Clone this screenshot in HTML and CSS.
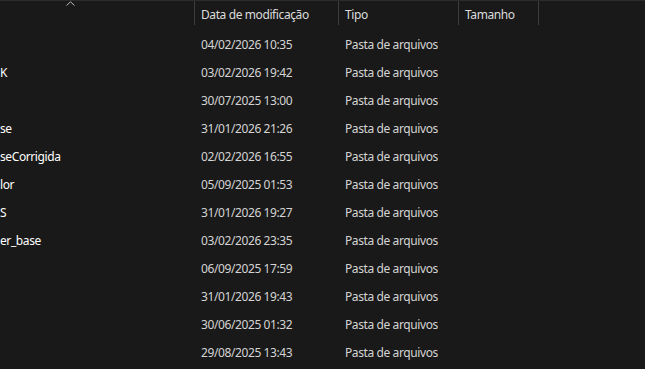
FILE: index.html
```html
<!DOCTYPE html>
<html lang="pt-BR">
<head>
<meta charset="utf-8">
<link rel="stylesheet" href="styles.css">
</head>
<body>
<div class="explorer">
  <div class="header">
    <div class="hcell name-h"><span class="sort-arrow"><svg width="9" height="5" viewBox="0 0 9 5"><path d="M0.5 4.5 L4.5 0.8 L8.5 4.5" fill="none" stroke="#bdbdbd" stroke-width="1"/></svg></span></div>
    <div class="hcell sep">Data de modificação</div>
    <div class="hcell sep">Tipo</div>
    <div class="hcell sep">Tamanho</div>
    <div class="hcell sep last"></div>
  </div>
  <div class="rows">
    <div class="row"><div class="name"></div><div class="date">04/02/2026 10:35</div><div class="type">Pasta de arquivos</div></div>
    <div class="row"><div class="name">K</div><div class="date">03/02/2026 19:42</div><div class="type">Pasta de arquivos</div></div>
    <div class="row"><div class="name"></div><div class="date">30/07/2025 13:00</div><div class="type">Pasta de arquivos</div></div>
    <div class="row"><div class="name">se</div><div class="date">31/01/2026 21:26</div><div class="type">Pasta de arquivos</div></div>
    <div class="row"><div class="name">seCorrigida</div><div class="date">02/02/2026 16:55</div><div class="type">Pasta de arquivos</div></div>
    <div class="row"><div class="name">lor</div><div class="date">05/09/2025 01:53</div><div class="type">Pasta de arquivos</div></div>
    <div class="row"><div class="name">S</div><div class="date">31/01/2026 19:27</div><div class="type">Pasta de arquivos</div></div>
    <div class="row"><div class="name">er_base</div><div class="date">03/02/2026 23:35</div><div class="type">Pasta de arquivos</div></div>
    <div class="row"><div class="name"></div><div class="date">06/09/2025 17:59</div><div class="type">Pasta de arquivos</div></div>
    <div class="row"><div class="name"></div><div class="date">31/01/2026 19:43</div><div class="type">Pasta de arquivos</div></div>
    <div class="row"><div class="name"></div><div class="date">30/06/2025 01:32</div><div class="type">Pasta de arquivos</div></div>
    <div class="row"><div class="name"></div><div class="date">29/08/2025 13:43</div><div class="type">Pasta de arquivos</div></div>
  </div>
</div>
</body>
</html>
```
FILE: styles.css
```css
html, body {
  margin: 0;
  padding: 0;
  background: #191919;
  overflow: hidden;
}
.explorer {
  width: 645px;
  height: 369px;
  border-top: 1px solid #2b2b2b;
  box-sizing: border-box;
  font-family: "Noto Sans", "Open Sans", sans-serif;
  font-size: 12px;
  letter-spacing: -0.4px;
  color: #e6e6e6;
}
.header {
  display: grid;
  grid-template-columns: 194px 144px 120px 80px 1fr;
  height: 29px;
}
.hcell {
  height: 24px;
  line-height: 27px;
  color: #dcdcdc;
  white-space: nowrap;
  overflow: hidden;
  position: relative;
}
.sep {
  border-left: 1px solid #3c3c3c;
  padding-left: 6px;
}
.name-h {
  position: relative;
}
.sort-arrow {
  position: absolute;
  left: 66px;
  top: 0px;
  line-height: 0;
}
.rows {
  display: flex;
  flex-direction: column;
}
.row {
  display: grid;
  grid-template-columns: 194px 144px 120px;
  height: 28px;
  align-items: center;
  white-space: nowrap;
}
.name {
  color: #ffffff;
  overflow: hidden;
}
.date, .type {
  padding-left: 7px;
  color: #d4d4d4;
}
```
